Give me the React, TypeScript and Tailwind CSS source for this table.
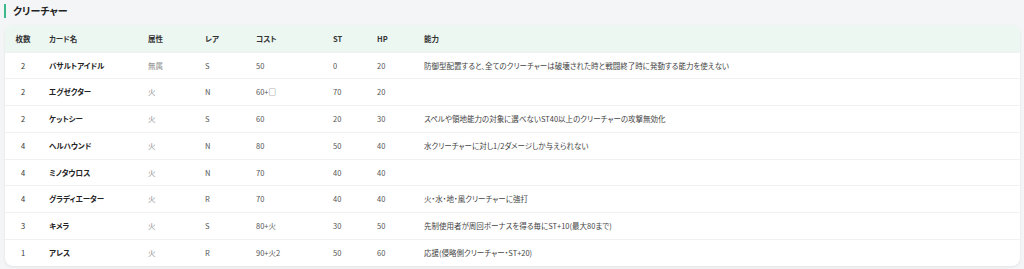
import React from "react";

type Creature = {
  count: number;
  name: string;
  attr: string;
  rarity: string;
  cost: string;
  st: number;
  hp: number;
  ability: string;
};

const creatures: Creature[] = [
  { count: 2, name: "バサルトアイドル", attr: "無属", rarity: "S", cost: "50", st: 0, hp: 20, ability: "防御型配置すると、全てのクリーチャーは破壊された時と戦闘終了時に発動する能力を使えない" },
  { count: 2, name: "エグゼクター", attr: "火", rarity: "N", cost: "60+□", st: 70, hp: 20, ability: "" },
  { count: 2, name: "ケットシー", attr: "火", rarity: "S", cost: "60", st: 20, hp: 30, ability: "スペルや領地能力の対象に選べないST40以上のクリーチャーの攻撃無効化" },
  { count: 4, name: "ヘルハウンド", attr: "火", rarity: "N", cost: "80", st: 50, hp: 40, ability: "水クリーチャーに対し1/2ダメージしか与えられない" },
  { count: 4, name: "ミノタウロス", attr: "火", rarity: "N", cost: "70", st: 40, hp: 40, ability: "" },
  { count: 4, name: "グラディエーター", attr: "火", rarity: "R", cost: "70", st: 40, hp: 40, ability: "火・水・地・風クリーチャーに強打" },
  { count: 3, name: "キメラ", attr: "火", rarity: "S", cost: "80+火", st: 30, hp: 50, ability: "先制使用者が周回ボーナスを得る毎にST+10(最大80まで)" },
  { count: 1, name: "アレス", attr: "火", rarity: "R", cost: "90+火2", st: 50, hp: 60, ability: "応援(侵略側クリーチャー・ST+20)" },
];

const App = () => {
  return (
    <div className="min-h-[269px] w-[1024px] bg-[#f4f5f7] px-[5px] pt-[4px] font-['Noto_Sans_CJK_JP','Noto_Sans',sans-serif] text-[#333] [font-feature-settings:'palt']">
      <h2 className="-ml-[1px] flex h-[14px] items-center border-l-[2px] border-[#3cb98a] pl-[7px] text-[10px] font-bold leading-none text-[#222]">
        クリーチャー
      </h2>
      <div className="mt-[7px] w-[1015px] overflow-hidden rounded-[8px] bg-white shadow-[0_1px_3px_rgba(0,0,0,0.08)]">
        <table className="w-full table-fixed border-collapse text-[7.5px] leading-none">
          <colgroup>
            <col className="w-[36px]" />
            <col className="w-[99px]" />
            <col className="w-[57px]" />
            <col className="w-[51px]" />
            <col className="w-[77px]" />
            <col className="w-[44px]" />
            <col className="w-[47px]" />
            <col />
          </colgroup>
          <thead>
            <tr className="h-[27px] bg-[#ecf7f2] text-[#333]">
              <th className="px-2 text-center font-bold">枚数</th>
              <th className="px-2 text-left font-bold">カード名</th>
              <th className="px-2 text-left font-bold">属性</th>
              <th className="px-2 text-left font-bold">レア</th>
              <th className="px-2 text-left font-bold">コスト</th>
              <th className="px-2 text-left font-bold">ST</th>
              <th className="px-2 text-left font-bold">HP</th>
              <th className="px-2 text-left font-bold">能力</th>
            </tr>
          </thead>
          <tbody>
            {creatures.map((c, i) => (
              <tr key={i} className="h-[26.75px] border-t border-[#f0f1f2] text-[#555]">
                <td className="px-2 text-center text-[#333]">{c.count}</td>
                <td className="px-2 font-bold text-[#222]">{c.name}</td>
                <td className="px-2 text-[#888]">{c.attr}</td>
                <td className="px-2">{c.rarity}</td>
                <td className="px-2">{c.cost}</td>
                <td className="px-2">{c.st}</td>
                <td className="px-2">{c.hp}</td>
                <td className="px-2 text-[#444]">{c.ability}</td>
              </tr>
            ))}
          </tbody>
        </table>
      </div>
    </div>
  );
};

export default App;
